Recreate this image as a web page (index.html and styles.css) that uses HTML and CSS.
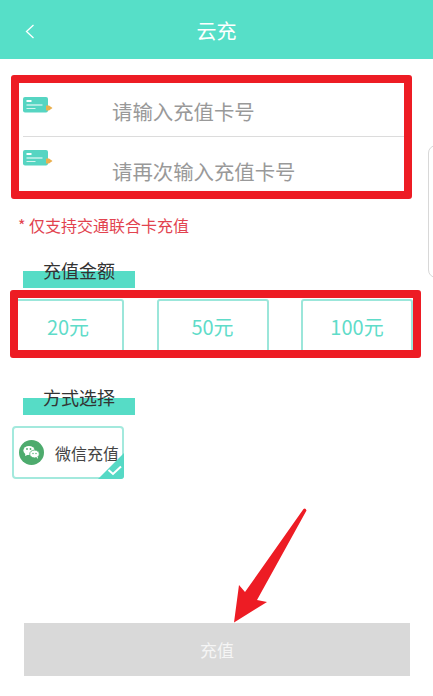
FILE: index.html
```html
<!DOCTYPE html>
<html lang="zh-CN">
<head>
    <meta charset="UTF-8">
    <meta name="viewport" content="width=device-width, initial-scale=1.0">
    <title>云充</title>
    <link rel="stylesheet" href="styles.css">
</head>
<body>
    <div class="page">
        <header class="top-bar">
            <svg class="back-icon" width="10" height="15" viewBox="0 0 10 15">
                <path d="M8.5 1 L1.5 7.5 L8.5 14" fill="none" stroke="#fff" stroke-width="1.3"/>
            </svg>
            <h1>云充</h1>
        </header>

        <div class="card-frame">
            <div class="card-row">
                <svg class="card-icon" width="30" height="16" viewBox="0 0 30 16">
                    <rect x="0" y="0" width="25" height="15.5" rx="2" fill="#56d5c2"/>
                    <rect x="3.5" y="3" width="5" height="2" fill="#fff"/>
                    <rect x="3.5" y="7.5" width="16" height="1" fill="#fff"/>
                    <rect x="3.5" y="11" width="9" height="1" fill="#d5f5ef"/>
                    <path d="M23 8.5 H26 L29.5 11 L26 13.5 H23 Z" fill="#eab04e"/>
                </svg>
                <span class="card-hint">请输入充值卡号</span>
            </div>
            <div class="card-row card-row-second">
                <svg class="card-icon" width="30" height="16" viewBox="0 0 30 16">
                    <rect x="0" y="0" width="25" height="15.5" rx="2" fill="#56d5c2"/>
                    <rect x="3.5" y="3" width="5" height="2" fill="#fff"/>
                    <rect x="3.5" y="7.5" width="16" height="1" fill="#fff"/>
                    <rect x="3.5" y="11" width="9" height="1" fill="#d5f5ef"/>
                    <path d="M23 8.5 H26 L29.5 11 L26 13.5 H23 Z" fill="#eab04e"/>
                </svg>
                <span class="card-hint">请再次输入充值卡号</span>
            </div>
        </div>

        <p class="note">* 仅支持交通联合卡充值</p>

        <h2 class="section-title"><span>充值金额</span></h2>
        <div class="amount-frame">
            <div class="amount-list">
                <div class="amount-item">20元</div>
                <div class="amount-item">50元</div>
                <div class="amount-item">100元</div>
            </div>
        </div>

        <h2 class="section-title section-title-pay"><span>方式选择</span></h2>
        <div class="pay-item">
            <svg class="wechat-icon" width="25" height="25" viewBox="0 0 25 25">
                <circle cx="12.5" cy="12.5" r="12.5" fill="#4dab6d"/>
                <ellipse cx="10" cy="10.5" rx="5.6" ry="4.6" fill="#fff"/>
                <path d="M6.5 13 L6 16 L9.5 14.5 Z" fill="#fff"/>
                <ellipse cx="15.5" cy="14" rx="4.8" ry="3.9" fill="#fff" stroke="#4dab6d" stroke-width="0.8"/>
                <path d="M17.5 17 L18.8 19 L18.8 16.5 Z" fill="#fff"/>
                <circle cx="8" cy="9" r="0.9" fill="#4dab6d"/>
                <circle cx="11.5" cy="9" r="0.9" fill="#4dab6d"/>
                <circle cx="14" cy="13.5" r="0.7" fill="#4dab6d"/>
                <circle cx="17" cy="13.5" r="0.7" fill="#4dab6d"/>
            </svg>
            <span class="pay-name">微信充值</span>
            <svg class="pay-check" width="26" height="26" viewBox="0 0 26 26">
                <path d="M26 0 V23 Q26 26 23 26 H0 Z" fill="#56d9c5"/>
                <path d="M10.5 17 L15 21 L23 13.5" fill="none" stroke="#fff" stroke-width="2"/>
            </svg>
        </div>

        <div class="submit-wrap">
            <div class="submit-btn">充值</div>
        </div>

        <!-- edge of a panel peeking in from the right -->
        <div class="side-handle"></div>

        <svg class="red-arrow" width="433" height="696" viewBox="0 0 433 696">
            <path d="M303.5 509 Q305.5 507.5 306.5 510.5 L257 600 L267 602 L234 622.5 L239 585 L245 592 Z" fill="#ed1c24"/>
        </svg>
    </div>
</body>
</html>
```

FILE: styles.css
```css
* {
    box-sizing: border-box;
}
body {
    margin: 0;
    font-family: "Noto Sans CJK SC", "Noto Sans", sans-serif;
    background-color: #fff;
}
.page {
    position: relative;
    display: flex;
    flex-direction: column;
    width: 433px;
    height: 696px;
    overflow: hidden;
}
.top-bar {
    position: relative;
    display: flex;
    align-items: center;
    justify-content: center;
    height: 59px;
    padding-top: 2px;
    background-color: #56dfc8;
}
.top-bar h1 {
    margin: 0;
    font-size: 20px;
    font-weight: 400;
    color: #fff;
}
.back-icon {
    position: absolute;
    left: 25px;
    top: 24px;
}
.card-frame {
    width: 401px;
    height: 124px;
    margin: 16px 0 0 11px;
    border: 8px solid #ed1c24;
    border-radius: 3px;
}
.card-row {
    display: flex;
    align-items: flex-start;
    height: 54px;
    margin-left: 4px;
    padding-top: 14px;
    border-bottom: 1px solid #dcdcdc;
}
.card-row-second {
    height: 54px;
    padding-top: 13px;
    border-bottom: none;
}
.card-icon {
    flex-shrink: 0;
    margin-right: 59px;
}
.card-hint {
    margin-top: -1px;
    font-size: 20.4px;
    line-height: 30px;
    color: #999;
}
.card-row-second .card-hint {
    margin-top: 6px;
}
.note {
    margin: 16px 0 0 18px;
    font-size: 16px;
    line-height: 20px;
    color: #e2434f;
}
.section-title {
    width: 112px;
    height: 17px;
    margin: 36px 0 0 23px;
    padding-left: 20px;
    font-size: 18px;
    font-weight: 400;
    line-height: 0;
    color: #333;
    background-color: #56dcc6;
}
.section-title span {
    display: block;
    margin-top: -1px;
}
.section-title-pay {
    margin-top: 40px;
}
.amount-frame {
    width: 411px;
    height: 68px;
    margin: 2px 0 0 10px;
    padding-top: 1px;
    border: 8px solid #ed1c24;
    border-radius: 3px;
    overflow: hidden;
}
.amount-list {
    display: flex;
    gap: 32.5px;
    margin-left: -6px;
}
.amount-item {
    flex-shrink: 0;
    width: 112px;
    height: 56px;
    font-size: 20px;
    line-height: 52px;
    text-align: center;
    color: #5fdcc9;
    border: 2px solid #9be6da;
    border-radius: 3px;
}
.pay-item {
    position: relative;
    display: flex;
    align-items: center;
    width: 112px;
    height: 53px;
    margin: 11px 0 0 12px;
    padding-left: 5px;
    border: 2px solid #a3e9dd;
    border-radius: 4px;
}
.wechat-icon {
    flex-shrink: 0;
    margin-right: 11px;
}
.pay-name {
    font-size: 16px;
    color: #444;
    white-space: nowrap;
}
.pay-check {
    position: absolute;
    right: -2px;
    bottom: -2px;
}
.submit-wrap {
    margin-top: auto;
    padding: 0 23px 20px 24px;
}
.submit-btn {
    height: 53px;
    font-size: 17px;
    line-height: 54px;
    text-align: center;
    color: #f5f5f5;
    background-color: #d9d9d9;
}
.side-handle {
    position: absolute;
    left: 428px;
    top: 145px;
    width: 20px;
    height: 133px;
    background-color: #fff;
    border: 1px solid #d8d8d8;
    border-radius: 8px;
}
.red-arrow {
    position: absolute;
    left: 0;
    top: 0;
    pointer-events: none;
}
```
